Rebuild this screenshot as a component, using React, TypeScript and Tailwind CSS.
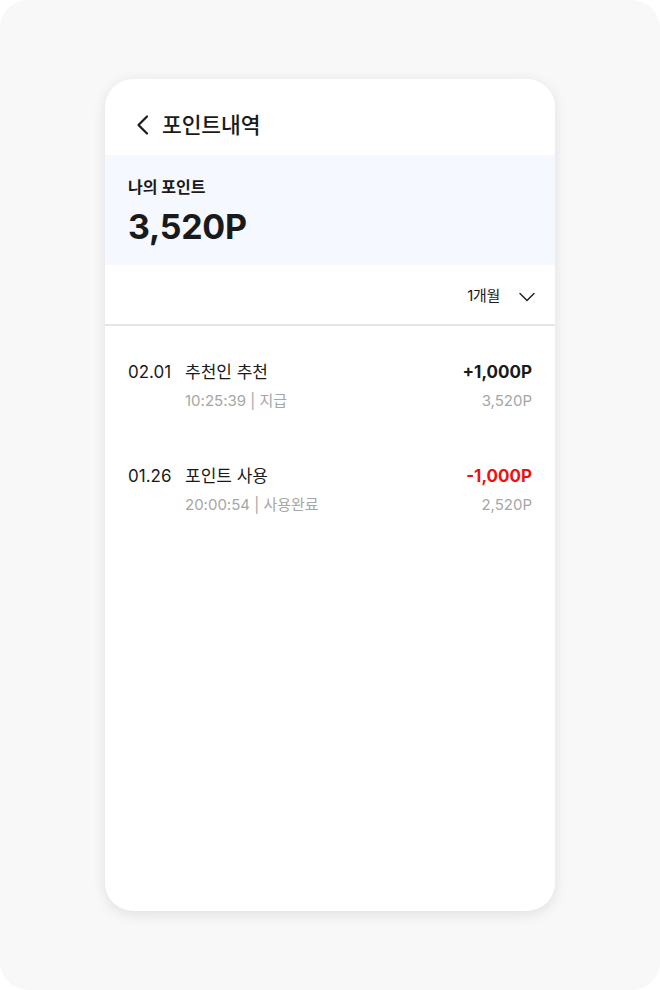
import React from "react";

const font = { fontFamily: 'Inter, "Noto Sans CJK KR", "Noto Sans", sans-serif' };

function Row({ date, title, time, kind, amount, balance, negative }: { date: string; title: string; time: string; kind: string; amount: string; balance: string; negative?: boolean }) {
  return (
    <div className="flex justify-between px-[23px]">
      <div className="flex">
        <div className="w-[57px] text-[17px] leading-[24px] text-[#1a1a1a]">{date}</div>
        <div className="flex flex-col">
          <div className="text-[17px] leading-[24px] text-[#1a1a1a]">{title}</div>
          <div className="mt-[6px] text-[15px] leading-[22px] text-[#a6a6a6]">
            {time} | {kind}
          </div>
        </div>
      </div>
      <div className="flex flex-col items-end">
        <div className={"text-[17px] leading-[24px] font-bold " + (negative ? "text-[#f20f0f]" : "text-[#1a1a1a]")}>{amount}</div>
        <div className="mt-[6px] text-[15px] leading-[22px] text-[#a6a6a6]">{balance}</div>
      </div>
    </div>
  );
}

export default function App() {
  return (
    <div className="w-[660px] h-[990px] bg-white" style={font}>
      <div className="w-[660px] h-[990px] rounded-[28px] bg-[#f8f8f8] pt-[79px] pl-[105px]">
        <div className="w-[450px] h-[832px] rounded-[28px] bg-white shadow-[0_3px_14px_rgba(0,0,0,0.10)] overflow-hidden flex flex-col">
          <div className="h-[76px] flex items-center pl-[30px] pt-[16px]">
            <svg width="16" height="24" viewBox="0 0 16 24" fill="none" className="mr-[11px]">
              <path d="M12 3.5 L3.5 12 L12 20.5" stroke="#1a1a1a" strokeWidth="2.2" strokeLinecap="round" strokeLinejoin="round" />
            </svg>
            <span className="text-[21.5px] font-medium text-[#1a1a1a] tracking-[-0.1px]">포인트내역</span>
          </div>
          <div className="h-[110px] bg-[#f5f9ff] pl-[23px] pt-[21px]">
            <div className="text-[16px] leading-[22px] font-bold text-[#1a1a1a]">나의 포인트</div>
            <div className="mt-[8px] text-[34px] leading-[42px] font-bold text-[#1a1a1a] tracking-[-0.3px]">3,520P</div>
          </div>
          <div className="h-[61px] flex items-center justify-end pr-[20px] pt-[4px] border-b-2 border-[#e6e6e6]">
            <span className="text-[15px] text-[#1a1a1a] tracking-[-0.3px]">1개월</span>
            <svg width="16" height="10" viewBox="0 0 16 10" fill="none" className="ml-[19px]">
              <path d="M1 1.5 L8 8.5 L15 1.5" stroke="#1a1a1a" strokeWidth="1.4" strokeLinecap="round" strokeLinejoin="round" />
            </svg>
          </div>
          <div className="pt-[34px] flex flex-col gap-[52px]">
            <Row date="02.01" title="추천인 추천" time="10:25:39" kind="지급" amount="+1,000P" balance="3,520P" />
            <Row date="01.26" title="포인트 사용" time="20:00:54" kind="사용완료" amount="-1,000P" balance="2,520P" negative />
          </div>
        </div>
      </div>
    </div>
  );
}
